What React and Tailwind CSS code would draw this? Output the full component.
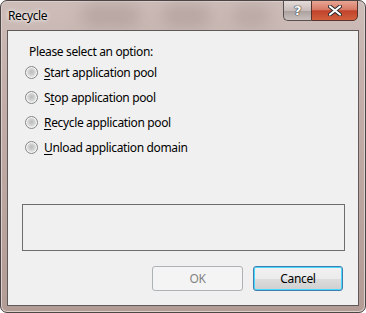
import React from 'react';

const options = [
    { key: 'S', rest: 'tart application pool', pre: '' },
    { key: 't', rest: 'op application pool', pre: 'S' },
    { key: 'R', rest: 'ecycle application pool', pre: '' },
    { key: 'U', rest: 'nload application domain', pre: '' },
];

const Radio = () => (
    <span className="w-[13px] h-[13px] rounded-full border border-[#848585] bg-[radial-gradient(circle_at_50%_45%,#b9baba_0%,#d2d3d3_40%,#eeeeee_75%,#f6f6f6_100%)] shadow-[inset_0_0_0_1px_#f6f6f6] shrink-0" />
);

const App = () => {
    return (
        <div className="w-[366px] h-[313px] font-['Noto_Sans',sans-serif] text-[12px] tracking-[-0.35px] text-black">
            <div className="relative w-full h-full rounded-[7px] border border-[#4b4545] bg-[linear-gradient(180deg,#cdbdb9_0%,#c3aea9_30%,#b39c96_100%)] shadow-[inset_0_0_0_1px_#dccfcc] overflow-hidden flex flex-col">
                {/* blurred glass blobs */}
                <div className="absolute left-[80px] top-[4px] w-[60px] h-[22px] bg-[#a89894] rounded-full blur-[8px] opacity-60" />
                <div className="absolute left-[160px] top-[4px] w-[50px] h-[22px] bg-[#a89894] rounded-full blur-[8px] opacity-60" />
                <div className="absolute left-[230px] top-[4px] w-[40px] h-[22px] bg-[#a89894] rounded-full blur-[8px] opacity-50" />

                {/* Title bar */}
                <div className="relative h-[29px] flex items-start">
                    <span className="ml-[7px] mt-[6px] text-[12px] [text-shadow:0_0_6px_#fff,0_0_3px_#fff]">Recycle</span>
                    <div className="absolute right-[7px] top-[-1px] flex h-[21px]">
                        <div className="w-[28px] h-full rounded-bl-[5px] border border-[#58504e] border-r-0 bg-[linear-gradient(180deg,#e4dcda_0%,#c8bcba_50%,#aa9f9d_51%,#c9c0be_100%)] flex items-center justify-center">
                            <span className="text-white font-bold text-[13px] leading-none font-['DejaVu_Sans',sans-serif] [text-shadow:0_0_1px_#333,0_0_1px_#333,0_0_1px_#333]">?</span>
                        </div>
                        <div className="w-[47px] h-full rounded-br-[5px] border border-[#58332c] bg-[linear-gradient(180deg,#e8a594_0%,#d77a66_45%,#c2432b_52%,#d2603f_100%)] flex items-center justify-center">
                            <svg width="14" height="11" viewBox="0 0 14 11">
                                <path d="M2 1.5 L12 9.5 M12 1.5 L2 9.5" stroke="#2b2b2b" strokeWidth="4" strokeLinecap="round" />
                                <path d="M2 1.5 L12 9.5 M12 1.5 L2 9.5" stroke="#ffffff" strokeWidth="2.2" strokeLinecap="round" />
                            </svg>
                        </div>
                    </div>
                </div>

                {/* Client area */}
                <div className="relative mx-[6px] mb-[6px] flex-1 border border-[#5f5a59] bg-[#f0f0f0] flex flex-col">
                    <div className="ml-[21px] mt-[13px] leading-[16px]">Please select an option:</div>
                    <div className="flex flex-col">
                        {options.map((o, i) => (
                            <div key={i} className="h-[25px] flex items-center ml-[17px] gap-[6px]">
                                <Radio />
                                <span className="leading-[16px]">
                                    {o.pre}<span className="underline underline-offset-2">{o.key}</span>{o.rest}
                                </span>
                            </div>
                        ))}
                    </div>

                    <div className="ml-[14px] mr-[13px] mt-[44px] h-[47px] border border-[#6d6d6d]" />

                    <div className="mt-[15px] flex justify-end gap-[10px] mr-[15px]">
                        <button className="w-[91px] h-[25px] rounded-[3px] border border-[#adb2b5] bg-[#f4f4f4] text-[#838383]">OK</button>
                        <button className="w-[90px] h-[25px] rounded-[3px] border border-[#3c7fb1] bg-[linear-gradient(180deg,#f2f2f2_0%,#ebebeb_50%,#dddddd_51%,#cfcfcf_100%)] shadow-[inset_0_0_0_1px_#48d8fb] text-black">Cancel</button>
                    </div>
                </div>
            </div>
        </div>
    );
};

export default App;
